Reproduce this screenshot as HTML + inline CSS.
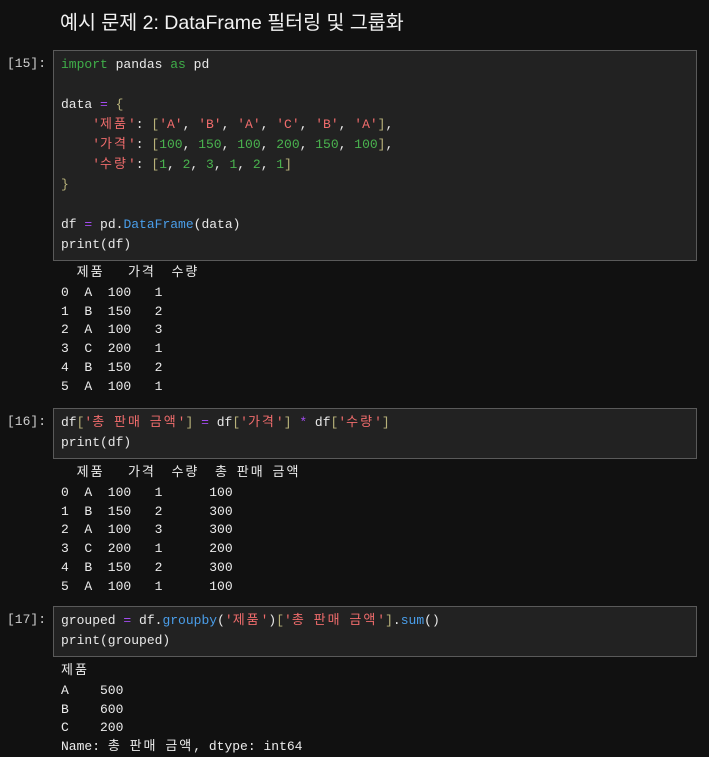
<!DOCTYPE html>
<html><head><meta charset="utf-8"><style>
body{margin:0;background:#111111;width:709px;height:753px;overflow:hidden;position:relative;font-family:"Liberation Mono","Noto Sans CJK KR",monospace;font-size:13px;color:#e8e8e8}
.t{position:absolute;left:60px;top:6px;font-family:"Liberation Sans","Noto Sans CJK KR",sans-serif;font-size:19.5px;color:#f2f2f2}
.p{position:absolute;left:0;width:46px;text-align:right;color:#cfcfcf}
.c{position:absolute;left:53px;width:644px;background:#222222;border:1px solid #5a5a5a;padding:4px 0 0 7px;box-sizing:border-box;line-height:20px;white-space:pre}
.o{position:absolute;left:61px;white-space:pre;line-height:18.7px;color:#ececec}
.o .h{line-height:22px;display:block}
.k{color:#3fae49}.s{color:#f06c6c}.n{color:#4ab34f}.op{color:#a34cf0}.f{color:#4a9eea}.b{color:#b8b27a}
i{font-style:normal;letter-spacing:2px}
</style></head><body>
<div class="t">예시 문제 2: DataFrame 필터링 및 그룹화</div>
<div class="p" style="top:56px">[15]:</div>
<div class="c" style="top:50px;height:211px"><span class="k">import</span> pandas <span class="k">as</span> pd

data <span class="op">=</span> <span class="b">{</span>
    <span class="s">'<i>제품</i>'</span>: <span class="b">[</span><span class="s">'A'</span>, <span class="s">'B'</span>, <span class="s">'A'</span>, <span class="s">'C'</span>, <span class="s">'B'</span>, <span class="s">'A'</span><span class="b">]</span>,
    <span class="s">'<i>가격</i>'</span>: <span class="b">[</span><span class="n">100</span>, <span class="n">150</span>, <span class="n">100</span>, <span class="n">200</span>, <span class="n">150</span>, <span class="n">100</span><span class="b">]</span>,
    <span class="s">'<i>수량</i>'</span>: <span class="b">[</span><span class="n">1</span>, <span class="n">2</span>, <span class="n">3</span>, <span class="n">1</span>, <span class="n">2</span>, <span class="n">1</span><span class="b">]</span>
<span class="b">}</span>

df <span class="op">=</span> pd.<span class="f">DataFrame</span>(data)
print(df)</div>
<div class="o" style="top:262px"><span class="h">  <i>제품</i>   <i>가격</i>  <i>수량</i></span>0  A  100   1
1  B  150   2
2  A  100   3
3  C  200   1
4  B  150   2
5  A  100   1</div>
<div class="p" style="top:414px">[16]:</div>
<div class="c" style="top:408px;height:51px">df<span class="b">[</span><span class="s">'<i>총</i> <i>판매</i> <i>금액</i>'</span><span class="b">]</span> <span class="op">=</span> df<span class="b">[</span><span class="s">'<i>가격</i>'</span><span class="b">]</span> <span class="op">*</span> df<span class="b">[</span><span class="s">'<i>수량</i>'</span><span class="b">]</span>
print(df)</div>
<div class="o" style="top:462px"><span class="h">  <i>제품</i>   <i>가격</i>  <i>수량</i>  <i>총</i> <i>판매</i> <i>금액</i></span>0  A  100   1      100
1  B  150   2      300
2  A  100   3      300
3  C  200   1      200
4  B  150   2      300
5  A  100   1      100</div>
<div class="p" style="top:612px">[17]:</div>
<div class="c" style="top:606px;height:51px">grouped <span class="op">=</span> df.<span class="f">groupby</span>(<span class="s">'<i>제품</i>'</span>)<span class="b">[</span><span class="s">'<i>총</i> <i>판매</i> <i>금액</i>'</span><span class="b">]</span>.<span class="f">sum</span>()
print(grouped)</div>
<div class="o" style="top:660px"><span class="h"><i>제품</i></span>A    500
B    600
C    200
Name: <i>총</i> <i>판매</i> <i>금액</i>, dtype: int64</div>
</body></html>
